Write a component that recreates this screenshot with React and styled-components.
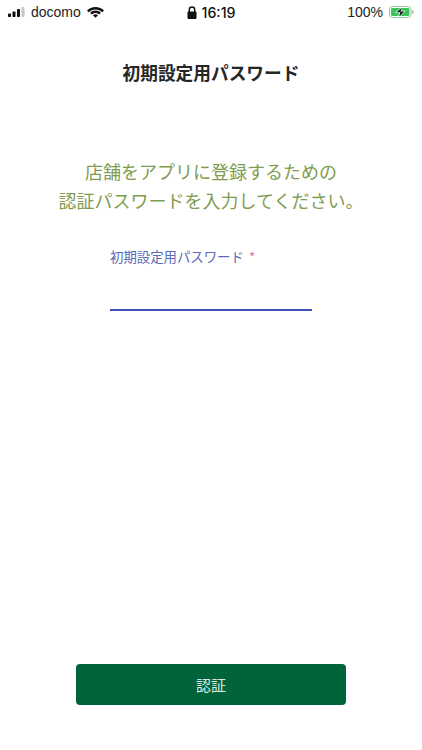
import React from "react";
import styled, { createGlobalStyle } from "styled-components";

const GlobalStyle = createGlobalStyle`
  html, body {
    margin: 0;
    padding: 0;
    background: #fff;
  }
  body {
    font-family: "Liberation Sans", "Noto Sans CJK JP", sans-serif;
  }
`;

const Screen = styled.div`
  width: 422px;
  height: 750px;
  display: flex;
  flex-direction: column;
  overflow: hidden;
`;

const StatusBar = styled.div`
  height: 24px;
  display: grid;
  grid-template-columns: 1fr auto 1fr;
  align-items: center;
  padding: 0 8px;
  font-size: 14px;
  color: #222;
`;

const StatusSide = styled.div`
  display: flex;
  align-items: center;
  gap: 6px;
  justify-content: ${(p) => (p.$end ? "flex-end" : "flex-start")};
`;

const Clock = styled.div`
  display: flex;
  align-items: center;
  gap: 5px;
  font-size: 14.2px;
  font-family: Inter, "Liberation Sans", sans-serif;
  font-weight: 500;
  color: #111;
`;

const Header = styled.h1`
  margin: 0;
  padding-top: 28px;
  height: 47px;
  box-sizing: content-box;
  text-align: center;
  font-size: 17.7px;
  line-height: 41px;
  font-weight: 700;
  color: #262626;
  font-family: "Noto Sans CJK JP", sans-serif;
`;

const Message = styled.p`
  margin: 58px 0 0;
  text-align: center;
  font-size: 18px;
  line-height: 29px;
  font-weight: 400;
  color: #7f9c50;
  font-family: "Noto Sans CJK JP", sans-serif;
`;

const Field = styled.div`
  width: 202px;
  margin: 32px auto 0 110px;
`;

const Label = styled.div`
  font-size: 13.4px;
  line-height: 19px;
  color: #5a69b8;
  font-family: "Noto Sans CJK JP", sans-serif;
  span {
    color: #e8689a;
    margin-left: 5px;
  }
`;

const Input = styled.div`
  height: 43px;
  border-bottom: 2px solid #3f51b5;
`;

const Spacer = styled.div`
  flex: 1;
`;

const Submit = styled.button`
  width: 270px;
  height: 41px;
  margin: 0 auto 45px;
  border: none;
  border-radius: 4px;
  background: #00633a;
  color: #dbe9e2;
  font-size: 15px;
  font-family: "Noto Sans CJK JP", sans-serif;
`;

const Signal = () => (
  <svg width="17" height="10" viewBox="0 0 17 10">
    <rect x="0" y="6.5" width="3" height="3.5" rx="0.7" fill="#111" />
    <rect x="4.5" y="4.5" width="3" height="5.5" rx="0.7" fill="#111" />
    <rect x="9" y="2" width="3" height="8" rx="0.7" fill="#111" />
    <rect x="13.5" y="0" width="3" height="10" rx="0.7" fill="#c8c8c8" />
  </svg>
);

const Wifi = () => (
  <svg width="17" height="11" viewBox="0 0 17 11">
    <path d="M8.5 0C5.2 0 2.2 1.3 0 3.4l1.7 1.8C3.5 3.5 5.9 2.4 8.5 2.4s5 1.1 6.8 2.8L17 3.4C14.8 1.3 11.8 0 8.5 0z" fill="#111" />
    <path d="M8.5 3.6c-2.1 0-4 .8-5.4 2.2l1.8 1.8c.9-.9 2.2-1.5 3.6-1.5s2.7.6 3.6 1.5l1.8-1.8C12.5 4.4 10.6 3.6 8.5 3.6z" fill="#111" />
    <path d="M8.5 7.2c-1 0-1.8.4-2.5 1l2.5 2.6L11 8.2c-.7-.6-1.5-1-2.5-1z" fill="#111" />
  </svg>
);

const Lock = () => (
  <svg width="10" height="13" viewBox="0 0 10 13">
    <path d="M2.3 6V3.8a2.7 2.7 0 0 1 5.4 0V6" fill="none" stroke="#111" strokeWidth="1.5" />
    <rect x="0.5" y="5.5" width="9" height="7.5" rx="1" fill="#111" />
  </svg>
);

const Battery = () => (
  <svg width="25" height="12" viewBox="0 0 25 12">
    <rect x="0.5" y="0.5" width="21.5" height="11" rx="2.8" fill="none" stroke="#8ccf9c" />
    <rect x="2" y="2" width="18.5" height="8" rx="1.4" fill="#3cc45c" />
    <path d="M23 4c1 .2 1.6 1 1.6 2s-.6 1.8-1.6 2z" fill="#b5b5b5" />
    <path d="M14 0 6 6.8h4.4L8.6 12l8-7.2h-4.4z" fill="#fff" />
    <path d="M13 1.6 7.6 6.2h3.8L10 10.4l5.2-4.8h-3.8z" fill="#111" />
  </svg>
);

export default function App() {
  return (
    <>
      <GlobalStyle />
      <Screen>
        <StatusBar>
          <StatusSide>
            <Signal />
            <span>docomo</span>
            <Wifi />
          </StatusSide>
          <Clock>
            <Lock />
            16:19
          </Clock>
          <StatusSide $end>
            <span>100%</span>
            <Battery />
          </StatusSide>
        </StatusBar>
        <Header>初期設定用パスワード</Header>
        <Message>
          店舗をアプリに登録するための
          <br />
          認証パスワードを入力してください。
        </Message>
        <Field>
          <Label>
            初期設定用パスワード<span>*</span>
          </Label>
          <Input />
        </Field>
        <Spacer />
        <Submit>認証</Submit>
      </Screen>
    </>
  );
}
